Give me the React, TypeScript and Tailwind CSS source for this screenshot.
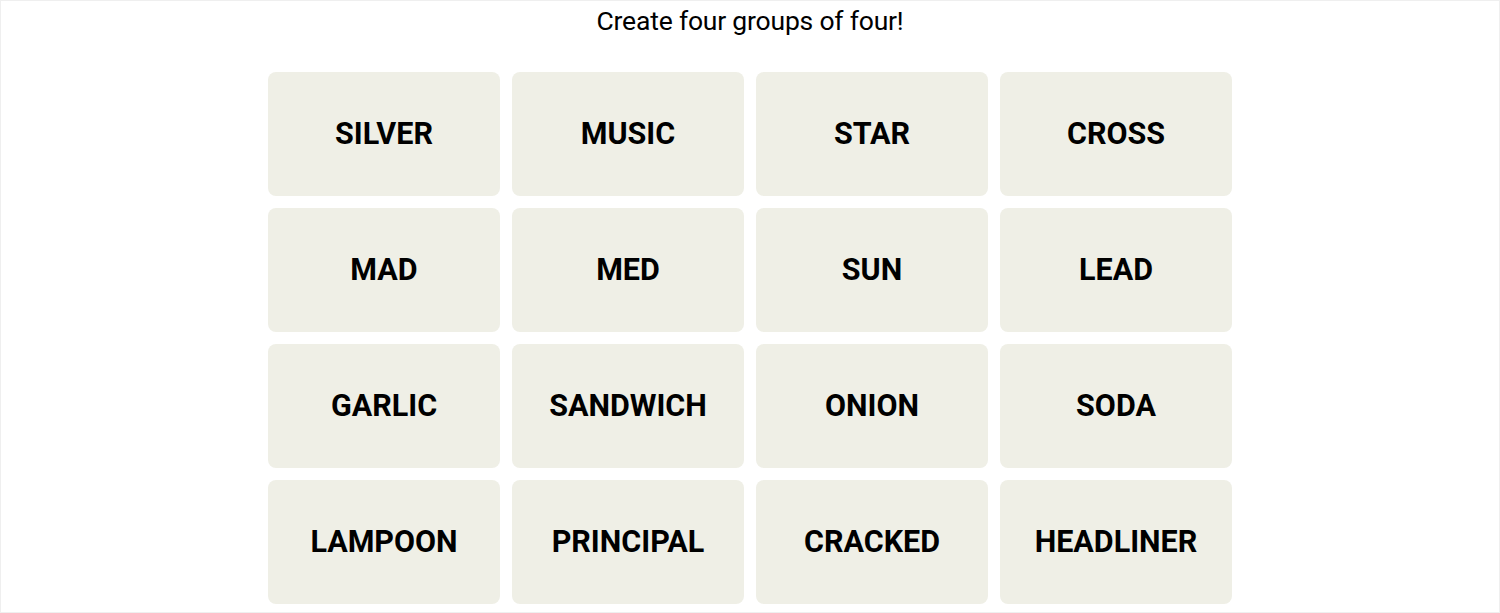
import React from "react";

const words = [
  "SILVER", "MUSIC", "STAR", "CROSS",
  "MAD", "MED", "SUN", "LEAD",
  "GARLIC", "SANDWICH", "ONION", "SODA",
  "LAMPOON", "PRINCIPAL", "CRACKED", "HEADLINER",
];

export default function App() {
  return (
    <div className="h-[613px] w-[1500px] border border-[#efefef] bg-white flex flex-col items-center" style={{ fontFamily: "Roboto, 'Liberation Sans', sans-serif" }}>
      <h1 className="mt-[4px] h-[32px] leading-[32px] text-[26.5px] font-normal text-black tracking-[-0.2px]">
        Create four groups of four!
      </h1>
      <div className="mt-[35px] grid grid-cols-[repeat(4,232px)] grid-rows-[repeat(4,124px)] gap-[12px]">
        {words.map((w) => (
          <div
            key={w}
            className="rounded-[8px] bg-[#efefe6] flex items-center justify-center text-[30.5px] font-bold text-black"
          >
            {w}
          </div>
        ))}
      </div>
    </div>
  );
}
